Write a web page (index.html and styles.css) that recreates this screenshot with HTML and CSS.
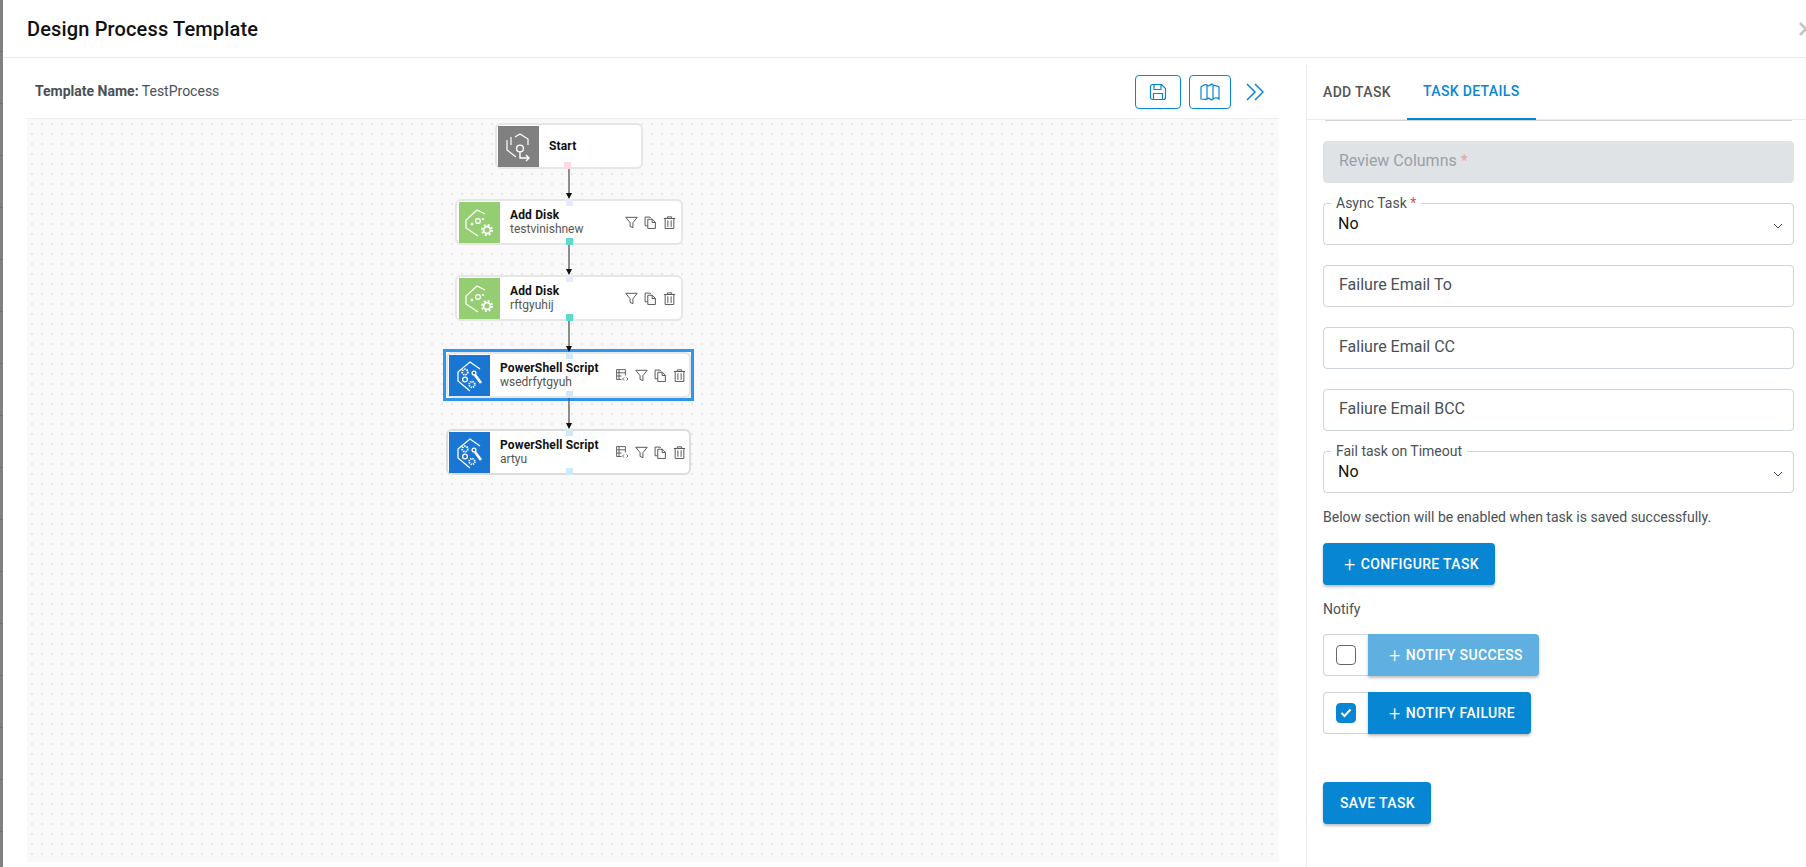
FILE: index.html
```html
<!DOCTYPE html>
<html lang="en">
<head>
    <meta charset="UTF-8">
    <title>Design Process Template</title>
    <link rel="stylesheet" href="styles.css">
</head>
<body>
    <svg class="defs" width="0" height="0">
        <symbol id="ic-start" viewBox="0 0 41 41">
            <path d="M13 11v8M17 11l5-3 8 5v6M9 14v10l9 7" fill="none" stroke="#fff" stroke-width="1.200"/>
            <circle cx="22" cy="22.500" r="3.400" fill="none" stroke="#fff" stroke-width="1.400"/>
            <path d="M22 26v6h9M28 29l3 3-3 3" fill="none" stroke="#fff" stroke-width="1.400"/>
        </symbol>
        <symbol id="ic-disk" viewBox="0 0 41 41">
            <path d="M26 12l-8-4L7 18v8l12 8" fill="none" stroke="#fff" stroke-width="1.300"/>
            <circle cx="19" cy="19" r="2.400" fill="none" stroke="#fff" stroke-width="1.300"/>
            <circle cx="13" cy="22" r="1.500" fill="#fff"/>
            <circle cx="24" cy="17" r="1.100" fill="#fff"/>
            <circle cx="28" cy="28" r="5" fill="none" stroke="#fff" stroke-width="2" stroke-dasharray="2 1.930"/>
            <circle cx="28" cy="28" r="3.400" fill="none" stroke="#fff" stroke-width="1.700"/>
        </symbol>
        <symbol id="ic-script" viewBox="0 0 41 41">
            <path d="M31 14L21 7 9 17v9l12 10" fill="none" stroke="#fff" stroke-width="1.300"/>
            <circle cx="16" cy="17" r="2.800" fill="none" stroke="#fff" stroke-width="1.800" stroke-dasharray="1.500 .9"/>
            <circle cx="16" cy="24.500" r="2.400" fill="none" stroke="#fff" stroke-width="1.300"/>
            <circle cx="23" cy="29.500" r="2.800" fill="none" stroke="#fff" stroke-width="1.800" stroke-dasharray="1.300 .9"/>
            <circle cx="25" cy="18" r="1.900" fill="none" stroke="#fff" stroke-width="1.300"/>
            <path d="M26 20l6 8" fill="none" stroke="#fff" stroke-width="2.800"/>
        </symbol>
        <symbol id="ic-filter" viewBox="0 0 12 12">
            <path d="M.7 1.200h10.600L7.300 6.200v4.600L4.700 9.600V6.200z" fill="none" stroke="#555" stroke-width=".9"/>
        </symbol>
        <symbol id="ic-copy" viewBox="0 0 12 12">
            <path d="M3 9H1V1h4.500l1 1" fill="none" stroke="#555" stroke-width=".9"/>
            <path d="M3.500 3h4.200l2.800 2.800v5.700h-7z" fill="none" stroke="#555" stroke-width=".9"/>
            <path d="M7.500 3v3h3" fill="none" stroke="#555" stroke-width=".9"/>
        </symbol>
        <symbol id="ic-trash" viewBox="0 0 12 12">
            <path d="M.8 2.300h10.400M4 2.200V.8h4v1.400M2 2.300v9.200h8V2.300M4.500 4v6M7.500 4v6" fill="none" stroke="#555" stroke-width=".9"/>
        </symbol>
        <symbol id="ic-code" viewBox="0 0 13 13">
            <path d="M5.500 10.500H.6V.6h8.800v6M.6 3.800h8.800M.6 7h4.900M3 .6v9.900" fill="none" stroke="#555" stroke-width=".9"/>
            <path d="M8 8.500L6.500 10 8 11.500M10.500 8.500L12 10l-1.500 1.500" fill="none" stroke="#555" stroke-width=".9"/>
        </symbol>
        <symbol id="ic-chevron" viewBox="0 0 10 6">
            <path d="M1 1l4 4 4-4" fill="none" stroke="#444" stroke-width="1"/>
        </symbol>
    </svg>

    <div class="backdrop"></div>
    <div class="modal">
        <header class="modal-head">
            <h1>Design Process Template</h1>
            <svg class="close" width="7" height="14" viewBox="0 0 7 14"><path d="M1 1l6 6 6 6M1 13l6-6" fill="none" stroke="#c4c4c4" stroke-width="2.500"/></svg>
        </header>
        <div class="modal-body">
            <section class="designer">
                <div class="toolbar">
                    <p class="tpl-name"><b>Template Name:</b> TestProcess</p>
                    <button class="tool-btn save-btn">
                        <svg width="18" height="18" viewBox="0 0 18 18"><path d="M1.500 3.500a2 2 0 0 1 2-2h9l4 4v9a2 2 0 0 1-2 2h-11a2 2 0 0 1-2-2zM5 1.500v5h7v-5M4.500 16.500v-6h9v6" fill="none" stroke="#0787d3" stroke-width="1.200"/></svg>
                    </button>
                    <button class="tool-btn map-btn">
                        <svg width="20" height="18" viewBox="0 0 20 18"><path d="M1 4c2-2 5-3 6-2 1 1 2 1 3 0 1-1 2-1 3 0 1 1 4 0 6 2v12c-2-2-5-1-6 0s-2 1-3 0-2-1-3 0-4 0-6 0zM7 2v14M13 2v14" fill="none" stroke="#0787d3" stroke-width="1.200"/></svg>
                    </button>
                    <svg class="collapse" width="18" height="18" viewBox="0 0 18 18"><path d="M1 1l8 8-8 8M9 1l8 8-8 8" fill="none" stroke="#0787d3" stroke-width="1.500"/></svg>
                </div>
                <div class="canvas">
                    <div class="node n-start">
                        <div class="node-ic gray"><svg width="41" height="41"><use href="#ic-start"/></svg></div>
                        <div class="node-txt"><b>Start</b></div>
                        <i class="port bottom pink"></i>
                    </div>

                    <div class="node task n-disk1">
                        <div class="node-ic green"><svg width="41" height="41"><use href="#ic-disk"/></svg></div>
                        <div class="node-txt"><b>Add Disk</b><span>testvinishnew</span></div>
                        <div class="node-acts">
                            <svg><use href="#ic-filter"/></svg>
                            <svg><use href="#ic-copy"/></svg>
                            <svg><use href="#ic-trash"/></svg>
                        </div>
                        <i class="port top lav"></i>
                        <i class="port bottom teal"></i>
                    </div>

                    <div class="node task n-disk2">
                        <div class="node-ic green"><svg width="41" height="41"><use href="#ic-disk"/></svg></div>
                        <div class="node-txt"><b>Add Disk</b><span>rftgyuhij</span></div>
                        <div class="node-acts">
                            <svg><use href="#ic-filter"/></svg>
                            <svg><use href="#ic-copy"/></svg>
                            <svg><use href="#ic-trash"/></svg>
                        </div>
                        <i class="port top lav"></i>
                        <i class="port bottom teal"></i>
                    </div>

                    <div class="node ps selected n-ps1">
                        <div class="node-ic blue"><svg width="41" height="41"><use href="#ic-script"/></svg></div>
                        <div class="node-txt"><b>PowerShell Script</b><span>wsedrfytgyuh</span></div>
                        <div class="node-acts">
                            <svg><use href="#ic-code"/></svg>
                            <svg><use href="#ic-filter"/></svg>
                            <svg><use href="#ic-copy"/></svg>
                            <svg><use href="#ic-trash"/></svg>
                        </div>
                        <i class="port top sky"></i>
                        <i class="port bottom sky"></i>
                    </div>

                    <div class="node ps n-ps2">
                        <div class="node-ic blue"><svg width="41" height="41"><use href="#ic-script"/></svg></div>
                        <div class="node-txt"><b>PowerShell Script</b><span>artyu</span></div>
                        <div class="node-acts">
                            <svg><use href="#ic-code"/></svg>
                            <svg><use href="#ic-filter"/></svg>
                            <svg><use href="#ic-copy"/></svg>
                            <svg><use href="#ic-trash"/></svg>
                        </div>
                        <i class="port top sky"></i>
                        <i class="port bottom sky"></i>
                    </div>

                    <svg class="links" width="1252" height="330">
                        <path d="M542 50v27M542 126v27M542 202v28M542 279v28" stroke="#555" stroke-width="1.300" fill="none"/>
                        <path d="M539 74h6l-3 6zM539 150h6l-3 6zM539 227h6l-3 6zM539 304h6l-3 6z" fill="#111"/>
                    </svg>
                </div>
            </section>

            <aside class="panel">
                <nav class="tabs">
                    <a class="tab">ADD TASK</a>
                    <a class="tab active">TASK DETAILS</a>
                </nav>
                <div class="panel-body">
                    <div class="cut-off"></div>
                    <div class="fields">
                        <div class="field disabled">Review Columns <em>*</em></div>
                        <div class="field select">
                            <label>Async Task <em>*</em></label>
                            <span>No</span>
                            <svg class="chev" width="10" height="6"><use href="#ic-chevron"/></svg>
                        </div>
                        <div class="field">Failure Email To</div>
                        <div class="field">Faliure Email CC</div>
                        <div class="field">Faliure Email BCC</div>
                        <div class="field select">
                            <label>Fail task on Timeout</label>
                            <span>No</span>
                            <svg class="chev" width="10" height="6"><use href="#ic-chevron"/></svg>
                        </div>
                    </div>
                    <p class="note">Below section will be enabled when task is saved successfully.</p>
                    <button class="btn"><span class="plus">+</span>CONFIGURE TASK</button>
                    <p class="notify-lbl">Notify</p>
                    <div class="notify-row">
                        <div class="check-wrap"><div class="check"></div></div>
                        <button class="btn faded"><span class="plus">+</span>NOTIFY SUCCESS</button>
                    </div>
                    <div class="notify-row">
                        <div class="check-wrap">
                            <div class="check on">
                                <svg width="12" height="10" viewBox="0 0 12 10"><path d="M1.500 5l3 3 6-6.500" fill="none" stroke="#fff" stroke-width="2"/></svg>
                            </div>
                        </div>
                        <button class="btn"><span class="plus">+</span>NOTIFY FAILURE</button>
                    </div>
                    <button class="btn save-task">SAVE TASK</button>
                </div>
            </aside>
        </div>
    </div>
</body>
</html>
```
FILE: styles.css
```css
*,
*::after,
*::before{
    padding: 0;
    margin: 0;
    box-sizing: border-box;
}
html,body{
    height: 100%;
}
body{
    display: flex;
    overflow: hidden;
    font: normal 14px/1.5 Roboto, sans-serif;
    color: #495057;
    background: #fff;
}
.defs{
    position: absolute;
}
.backdrop{
    width: 3px;
    background: repeating-linear-gradient(#808080 0 51px, #707070 51px 52px);
}
.modal{
    flex: 1;
    display: flex;
    flex-direction: column;
    min-width: 0;
}
.modal-head{
    height: 58px;
    border-bottom: 1px solid #e9ecef;
    display: flex;
    align-items: center;
    justify-content: space-between;
    padding-left: 24px;
}
.modal-head h1{
    font-size: 20px;
    font-weight: 500;
    letter-spacing: .15px;
    color: #111;
}
.modal-body{
    flex: 1;
    display: flex;
    min-height: 0;
}
.designer{
    width: 1303px;
    padding: 0 27px 5px 24px;
    display: flex;
    flex-direction: column;
}
.toolbar{
    height: 60px;
    display: flex;
    align-items: center;
    padding: 7px 15px 0 8px;
}
.tpl-name{
    flex: 1;
    font-size: 14px;
}
.tpl-name b{
    font-weight: 700;
}
.tool-btn{
    height: 34px;
    background: #fff;
    border: 1px solid #0787d3;
    border-radius: 4px;
    display: flex;
    align-items: center;
    justify-content: center;
    cursor: pointer;
}
.save-btn{
    width: 46px;
    margin-right: 8px;
}
.map-btn{
    width: 42px;
    margin-right: 15px;
}
.canvas{
    flex: 1;
    position: relative;
    border-top: 1px solid #eee;
    background-color: #f9f9f9;
    background-image: radial-gradient(#e8e8e8 0.8px, transparent 1px);
    background-size: 10px 10px;
}
.links{
    position: absolute;
    left: 0;
    top: 0;
    pointer-events: none;
}
.node{
    position: absolute;
    height: 46px;
    padding: 1px;
    display: flex;
    align-items: center;
    background: #fff;
    border: 2px solid #e6e6e6;
    border-radius: 6px;
    color: #111;
}
.n-start{
    left: 468px;
    top: 4px;
    width: 148px;
}
.task{
    left: 428px;
    width: 228px;
    padding-left: 2px;
}
.n-disk1{
    top: 80px;
}
.n-disk2{
    top: 156px;
}
.ps{
    left: 419px;
    width: 245px;
}
.n-ps1{
    top: 233px;
}
.n-ps2{
    top: 310px;
    border-color: #dcdcdc;
}
.selected::before{
    content: "";
    position: absolute;
    top: -5px;
    bottom: -5px;
    left: -5px;
    right: -5px;
    border: 3px solid #2f96ee;
    pointer-events: none;
}
.node-ic{
    width: 41px;
    height: 41px;
    flex: none;
}
.node-ic svg{
    display: block;
}
.gray{
    background: #808080;
}
.green{
    background: #95cd72;
}
.blue{
    background: #1976d2;
}
.node-txt{
    flex: 1;
    padding-left: 10px;
    display: flex;
    flex-direction: column;
    font-size: 12px;
    line-height: 14px;
}
.node-txt b{
    font-weight: 700;
    letter-spacing: .15px;
}
.node-txt span{
    color: #555;
}
.node-acts{
    display: flex;
    gap: 6px;
    padding-right: 4px;
}
.ps .node-acts{
    padding-right: 2px;
}
.node-acts svg{
    width: 13px;
    height: 13px;
}
.port{
    position: absolute;
    width: 7px;
    height: 7px;
}
.port.top{
    top: -2px;
}
.port.bottom{
    bottom: -2px;
}
.n-start .port{
    left: 67px;
}
.task .port{
    left: 109px;
}
.ps .port{
    left: 118px;
}
.pink{
    background: #fbdbe3;
}
.lav{
    background: #e6eafa;
}
.teal{
    background: #5fd8cf;
}
.sky{
    background: #cfe9fb;
}
.panel{
    flex: 1;
    margin-top: 7px;
    border-left: 1px solid #e9ecef;
    display: flex;
    flex-direction: column;
}
.tabs{
    height: 55px;
    display: flex;
    border-bottom: 1px solid #e9ecef;
}
.tab{
    height: 55px;
    padding: 0 16px;
    display: flex;
    align-items: center;
    font-weight: 500;
    color: #555;
    letter-spacing: .35px;
}
.tab.active{
    color: #0787d3;
    border-bottom: 2px solid #0787d3;
}
.panel-body{
    padding: 0 12px 0 16px;
}
.cut-off{
    height: 1px;
    margin: 0 2px 20px;
    background: #ced4da;
}
.fields{
    display: flex;
    flex-direction: column;
    gap: 20px;
}
.field{
    position: relative;
    height: 42px;
    padding: 0 15px 2px;
    display: flex;
    align-items: center;
    border: 1px solid #ced4da;
    border-radius: 4px;
    font-size: 16px;
    color: #495057;
}
.field em{
    font-style: normal;
    color: #e74c5e;
    margin-left: 4px;
}
.disabled{
    background: #e0e3e6;
    border-color: #e0e3e6;
    color: #9aa0a6;
}
.disabled em{
    color: #e9a3a9;
}
.select{
    color: #111;
}
.select label{
    position: absolute;
    left: 7px;
    top: -10px;
    padding: 0 5px;
    background: #fff;
    font-size: 14px;
    line-height: 18px;
    color: #495057;
}
.select label em{
    margin-left: 0;
}
.select span{
    flex: 1;
    padding-top: 2px;
    margin-left: -1px;
}
.chev{
    position: absolute;
    right: 10px;
    top: 19px;
}
.note{
    margin-top: 14px;
    line-height: 20px;
    font-size: 14px;
}
.btn{
    display: block;
    height: 42px;
    padding: 0 16px 0 17px;
    border: none;
    border-radius: 4px;
    background: #0787d3;
    color: #fff;
    font: 500 14px/42px Roboto, sans-serif;
    letter-spacing: .35px;
    box-shadow: 0 2px 3px rgba(0,0,0,.25);
    cursor: pointer;
}
.plus{
    font-size: 20px;
    font-weight: 300;
    line-height: 1;
    margin: 0 5px 0 4px;
    vertical-align: -2px;
}
.note + .btn{
    margin-top: 16px;
}
.notify-lbl{
    margin-top: 14px;
    line-height: 20px;
}
.notify-row{
    display: flex;
    margin-top: 16px;
}
.notify-lbl + .notify-row{
    margin-top: 15px;
}
.notify-row .btn{
    border-radius: 0 4px 4px 0;
}
.faded{
    background: #5fb0e1;
}
.check-wrap{
    width: 45px;
    height: 42px;
    display: flex;
    align-items: center;
    justify-content: center;
    border: 1px solid #ced4da;
    border-right: none;
    border-radius: 4px 0 0 4px;
}
.check{
    width: 20px;
    height: 20px;
    border: 1px solid #666;
    border-radius: 4px;
    display: flex;
    align-items: center;
    justify-content: center;
}
.check.on{
    background: #0787d3;
    border-color: #0787d3;
}
.save-task{
    margin-top: 48px;
}
```
